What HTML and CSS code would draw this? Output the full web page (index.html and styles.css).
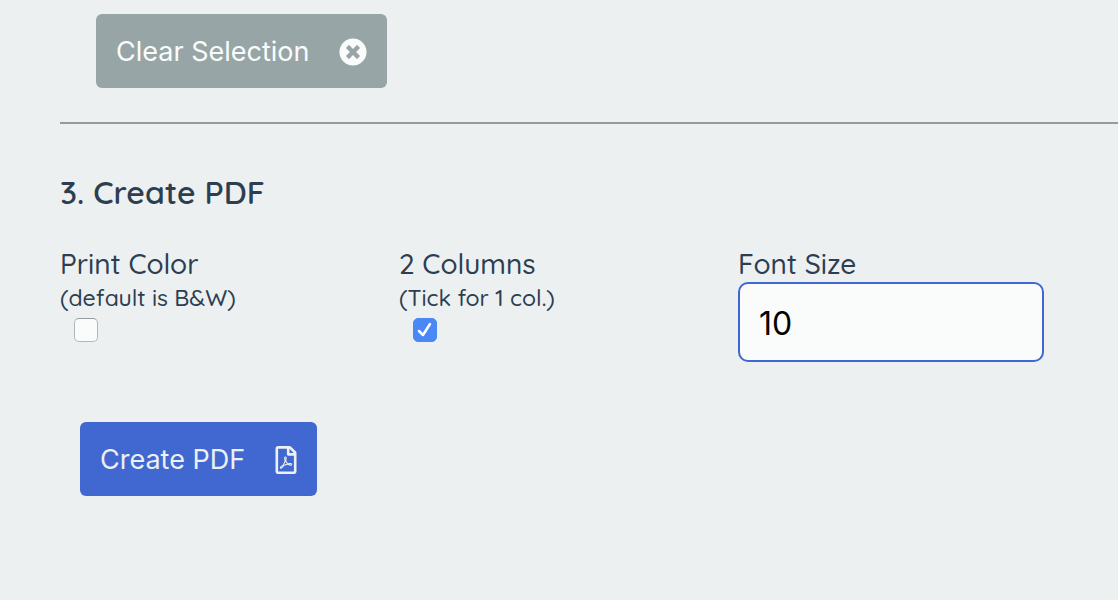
FILE: index.html
```
<!DOCTYPE html>
<html lang="en">
<head>
<meta charset="utf-8">
<meta name="viewport" content="width=device-width, initial-scale=1">
<title>Create PDF</title>
<link rel="stylesheet" href="styles.css">
</head>
<body>
<main class="page">
  <button class="btn btn-clear" type="button">
    <span>Clear Selection</span>
    <svg class="icon" viewBox="0 0 512 512" aria-hidden="true"><path d="M256 8C119 8 8 119 8 256s111 248 248 248 248-111 248-248S393 8 256 8zm121.600 313.100c4.700 4.700 4.700 12.300 0 17L338 377.600c-4.700 4.700-12.300 4.700-17 0L256 312l-65.100 65.600c-4.700 4.700-12.300 4.700-17 0L134.400 338c-4.700-4.700-4.700-12.300 0-17l65.600-65-65.600-65.100c-4.700-4.700-4.700-12.300 0-17l39.600-39.600c4.700-4.700 12.300-4.700 17 0l65 65.700 65.100-65.600c4.700-4.700 12.300-4.700 17 0l39.600 39.600c4.700 4.700 4.700 12.300 0 17L312 256l65.600 65.100z"/></svg>
  </button>
  <hr class="rule">
  <h2 class="title">3. Create PDF</h2>
  <form class="options">
    <div class="field">
      <label class="label" for="color">Print Color</label>
      <small class="hint" id="color-hint">(default is B&amp;W)</small>
      <input class="check" id="color" type="checkbox" aria-describedby="color-hint">
    </div>
    <div class="field">
      <label class="label" for="columns">2 Columns</label>
      <small class="hint" id="columns-hint">(Tick for 1 col.)</small>
      <input class="check" id="columns" type="checkbox" aria-describedby="columns-hint" checked>
    </div>
    <div class="field">
      <label class="label" for="size">Font Size</label>
      <input class="text" id="size" type="text" inputmode="numeric" value="10">
    </div>
  </form>
  <button class="btn btn-create" type="button">
    <span>Create PDF</span>
    <svg class="icon icon-file" viewBox="0 0 384 512" aria-hidden="true"><path d="M369.900 97.900L286 14C277 5 264.800-.1 252.100-.1H48C21.500 0 0 21.500 0 48v416c0 26.500 21.500 48 48 48h288c26.500 0 48-21.500 48-48V131.900c0-12.700-5.100-25-14.100-34zM332.100 128H256V51.900l76.100 76.100zM48 464V48h160v104c0 13.300 10.700 24 24 24h104v288H48zm250.200-143.700c-12.200-12-47-8.700-64.400-6.500-17.200-10.500-28.700-25-36.800-46.300 3.900-16.100 10.100-40.600 5.400-56-4.200-26.200-37.800-23.600-42.600-5.900-4.400 16.100-.4 38.500 7 67.100-10 23.900-24.900 56-35.400 74.400-20 10.300-47 26.200-51 46.200-3.300 15.800 26 55.200 76.100-31.200 22.400-7.400 46.800-16.500 68.400-20.100 18.900 10.200 41 17 55.800 17 25.500 0 28-28.200 17.500-38.700zm-198.100 77.800c5.100-13.700 24.500-29.500 30.400-35-19 30.300-30.400 35.700-30.400 35zm81.600-190.600c7.400 0 6.700 32.100 1.800 40.800-4.400-13.900-4.300-40.800-1.800-40.800zm-24.400 136.600c9.700-16.900 18-37 24.700-54.700 8.300 15.100 18.900 27.200 30.100 35.500-20.800 4.300-38.900 13.100-54.800 19.200zm131.600-5s-5 6-37.300-7.800c35.100-2.600 40.900 5.400 37.300 7.800z"/></svg>
  </button>
</main>
</body>
</html>
```
FILE: styles.css
```
* { box-sizing: border-box; }

body {
  margin: 0;
  background: #ecf0f1;
  color: #2c3e50;
  font-family: Quicksand, Lato, sans-serif;
}

.page { padding: 14px 0 40px 60px; }

.btn {
  display: flex;
  align-items: center;
  gap: 30px;
  padding: 21px 20px 19px;
  border: 0;
  border-radius: 6px;
  font: 400 27px/34px Inter, sans-serif;
}

.btn-clear {
  margin-left: 36px;
  background: #98a5a6;
  color: #fafcfc;
}

.btn-create {
  margin: 60px 0 0 20px;
  background: #4167d0;
  color: #ecf0f1;
}

.icon {
  width: 28px;
  height: 28px;
  fill: currentColor;
}

.icon-file { width: 22px; }

.rule {
  margin: 34px 0 47px;
  border: 0;
  border-top: 2px solid #999;
}

.title {
  margin: 0 0 34px;
  font-size: 32px;
  font-weight: 600;
  line-height: 42px;
}

.options {
  display: grid;
  grid-template-columns: repeat(3, 1fr);
  column-gap: 33px;
  padding-right: 74px;
}

.field {
  display: flex;
  flex-direction: column;
  align-items: flex-start;
}

.label {
  font-size: 28px;
  font-weight: 500;
  line-height: 34px;
}

.hint {
  font-size: 23px;
  font-weight: 500;
  line-height: 34px;
}

.check {
  appearance: none;
  width: 24px;
  height: 24px;
  margin: 3px 0 0 14px;
  border: 1px solid #b4b7b8;
  border-top-color: #999c9d;
  border-radius: 5px;
  background: #fafcfc;
}

.check:checked {
  border-color: #4a88f7;
  background: #4a88f7 url("data:image/svg+xml,%3Csvg xmlns='http://www.w3.org/2000/svg' viewBox='0 0 22 22'%3E%3Cpath d='M5 12l4 4 7-11' fill='none' stroke='white' stroke-width='2.500' stroke-linecap='round' stroke-linejoin='round'/%3E%3C/svg%3E") center / 22px no-repeat;
}

.text {
  width: 100%;
  height: 80px;
  margin-top: 1px;
  padding: 2px 19px 0;
  border: 2px solid #4167d0;
  border-radius: 10px;
  background: #fafcfc;
  color: #000;
  font: 400 32px/40px Inter, sans-serif;
}
```
